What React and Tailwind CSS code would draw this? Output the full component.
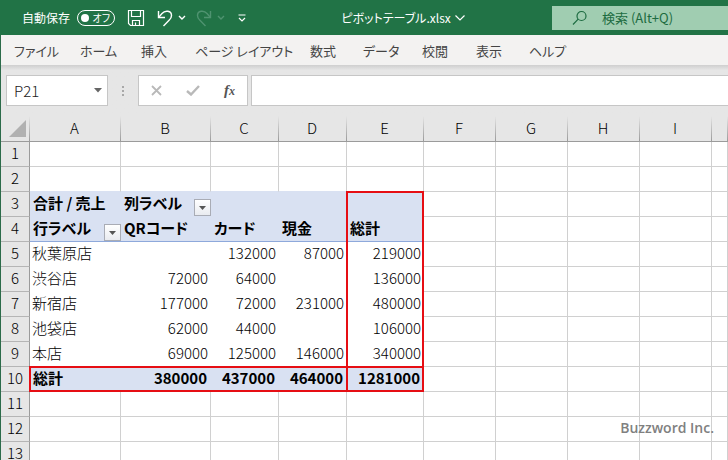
import React from "react";

const tabs = [
  "ファイル",
  "ホーム",
  "挿入",
  "ページ レイアウト",
  "数式",
  "データ",
  "校閲",
  "表示",
  "ヘルプ",
];

const columns = ["A", "B", "C", "D", "E", "F", "G", "H", "I", ""];

const sheet = {
  3: ["合計 / 売上", "列ラベル", "", "", ""],
  4: ["行ラベル", "QRコード", "カード", "現金", "総計"],
  5: ["秋葉原店", "", "132000", "87000", "219000"],
  6: ["渋谷店", "72000", "64000", "", "136000"],
  7: ["新宿店", "177000", "72000", "231000", "480000"],
  8: ["池袋店", "62000", "44000", "", "106000"],
  9: ["本店", "69000", "125000", "146000", "340000"],
  10: ["総計", "380000", "437000", "464000", "1281000"],
};

const rowNumbers = [1, 2, 3, 4, 5, 6, 7, 8, 9, 10, 11, 12, 13];

function Chevron({ className }) {
  return (
    <svg className={className} viewBox="0 0 8 5" fill="none" stroke="currentColor" strokeWidth="1.4">
      <path d="M1 1l3 3 3-3" />
    </svg>
  );
}

function TitleBar() {
  return (
    <header className="flex h-[35px] shrink-0 items-center bg-[#217346] pl-[22px] text-xs text-white">
      <label className="flex shrink-0 items-center gap-[7px]">
        自動保存
        <span className="flex h-4 w-[38px] items-center justify-between rounded-full border border-white pl-[3px] pr-1">
          <input
            type="checkbox"
            className="h-2 w-2 appearance-none rounded-full bg-white"
          />
          <span className="text-[10px] leading-3">オフ</span>
        </span>
      </label>
      <button aria-label="上書き保存" className="ml-3 shrink-0">
        <svg className="h-[18px] w-[18px]" viewBox="0 0 18 18" fill="none" stroke="currentColor" strokeWidth="1.2">
          <path d="M1.5 1.5h15v15H3.5l-2-2z" />
          <path d="M4.5 1.5v6h9v-6M5.5 16.5v-5h7v5M8.5 16v-2.5" />
        </svg>
      </button>
      <button aria-label="元に戻す" className="ml-3 flex shrink-0 items-center gap-[5px]">
        <svg className="h-[18px] w-4" viewBox="0 0 16 18" fill="none" stroke="currentColor" strokeWidth="1.4">
          <path d="M1.500 2v6.500H8" />
          <path d="M1.500 8.500L5 4.500C8 1 14.500 1.500 14.500 6.500c0 2-.9 3.300-2.200 4.500L6.500 17" />
        </svg>
        <Chevron className="h-[5px] w-2" />
      </button>
      <button aria-label="やり直し" disabled className="ml-[10px] flex shrink-0 items-center gap-[5px] text-[#4f9370]">
        <svg className="h-[18px] w-4" viewBox="0 0 16 18" fill="none" stroke="currentColor" strokeWidth="1.4">
          <path d="M14.500 2v6.500H8" />
          <path d="M14.500 8.500L11 4.500C8 1 1.500 1.500 1.500 6.500c0 2 .9 3.300 2.200 4.500L9.500 17" />
        </svg>
        <Chevron className="h-[5px] w-2" />
      </button>
      <button aria-label="クイック アクセス ツール バーのユーザー設定" className="ml-[13px] shrink-0">
        <svg className="h-2 w-2" viewBox="0 0 8 8" fill="none" stroke="currentColor" strokeWidth="1.200">
          <path d="M.5 1h7M1 4l3 3 3-3" />
        </svg>
      </button>
      <div className="flex flex-1 justify-center pl-2">
        <button className="flex items-center gap-1">
          ピボットテーブル.xlsx
          <svg className="h-[6px] w-[10px]" viewBox="0 0 10 6" fill="none" stroke="currentColor" strokeWidth="1.200">
            <path d="M.5.5L5 5 9.500.5" />
          </svg>
        </button>
      </div>
      <label className="flex h-6 w-44 shrink-0 items-center gap-[14px] bg-[#a0cdb1] pl-5 text-[#1c6b40]">
        <svg className="h-4 w-4 shrink-0" viewBox="0 0 16 16" fill="none" stroke="currentColor" strokeWidth="1.200" aria-label="検索">
          <circle cx="9.500" cy="6" r="4.500" />
          <path d="M6.200 9.200L1 14.500" />
        </svg>
        <input
          type="text"
          placeholder="検索 (Alt+Q)"
          className="w-full min-w-0 bg-transparent text-[13px] text-[#1c6b40] outline-none placeholder:text-[#1c6b40]"
        />
      </label>
    </header>
  );
}

function Ribbon() {
  return (
    <nav className="grid h-[30px] shrink-0 grid-cols-[66px_61px_54px_115px_53px_59px_54px_53px_1fr] items-center bg-[#f3f2f1] pl-[13px] pt-[2px] text-[13px] text-[#444]">
      {tabs.map((tab) => (
        <button key={tab} className="whitespace-nowrap text-left">
          {tab}
        </button>
      ))}
    </nav>
  );
}

function FormulaBar() {
  return (
    <div className="flex h-[51px] shrink-0 items-center bg-[#e6e6e6] bg-linear-to-b from-[#cfcfcf] from-0% to-[#e6e6e6] to-10% pl-[5px]">
      <div className="flex h-[31px] w-[102px] items-center border border-[#c6c6c6] bg-white pl-[7px] pr-[5px]">
        <input
          type="text"
          aria-label="名前ボックス"
          defaultValue="P21"
          className="w-full min-w-0 pt-[2px] text-[15px] font-light text-[#222] outline-none"
        />
        <button aria-label="名前の一覧" className="text-[#666]">
          <svg className="h-[5px] w-2" viewBox="0 0 8 5" fill="currentColor">
            <path d="M0 0h8L4 4.500z" />
          </svg>
        </button>
      </div>
      <div className="mx-[14px] flex w-[2px] flex-col gap-[2px]">
        <span className="h-[2px] bg-[#a8a8a8]" />
        <span className="h-[2px] bg-[#a8a8a8]" />
        <span className="h-[2px] bg-[#a8a8a8]" />
      </div>
      <div className="flex h-[31px] w-[110px] items-center justify-between border border-[#c6c6c6] bg-white pl-3 pr-3 text-[#b9b9b9]">
        <button aria-label="キャンセル">
          <svg className="h-[11px] w-[11px]" viewBox="0 0 11 11" fill="none" stroke="currentColor" strokeWidth="1.800">
            <path d="M1 1l9 9M10 1l-9 9" />
          </svg>
        </button>
        <button aria-label="入力">
          <svg className="h-[11px] w-[14px]" viewBox="0 0 14 11" fill="none" stroke="currentColor" strokeWidth="2.400">
            <path d="M1 6l4 3.500L13 1" />
          </svg>
        </button>
        <button
          aria-label="関数の挿入"
          className="font-['Liberation_Serif',serif] text-[15px] leading-4 font-bold text-[#555] italic"
        >
          f<span className="text-xs">x</span>
        </button>
      </div>
      <input
        type="text"
        aria-label="数式バー"
        className="ml-[3px] h-[31px] min-w-0 flex-1 border border-r-0 border-[#c6c6c6] bg-white outline-none"
      />
    </div>
  );
}

function FilterButton({ label }) {
  return (
    <button
      aria-label={label}
      className="flex h-[17px] w-[17px] shrink-0 items-center justify-center border border-[#a9acb5] bg-linear-to-b from-white to-[#e9ebf0] text-[#555]"
    >
      <svg className="h-1 w-[7px]" viewBox="0 0 7 4" fill="currentColor">
        <path d="M0 0h7L3.500 4z" />
      </svg>
    </button>
  );
}

function Cell({ row, col }) {
  const inPivot = row >= 3 && row <= 10 && col < 5;

  if (!inPivot) {
    // the line above the pivot table takes the header fill
    const bottom = row === 2 && col < 5 ? "border-b-[#d9e1f2]" : "border-b-[#d0d0d0]";
    return <td className={`border-r border-b border-r-[#d0d0d0] ${bottom}`} />;
  }

  const value = sheet[row][col];
  const isNumber = /^\d+$/.test(value);

  if (row <= 4) {
    const hasFilter = (row === 3 && col === 1) || (row === 4 && col === 0);
    return (
      <td className={`border-b bg-[#d9e1f2] pl-[3px] font-bold ${row === 4 ? "border-[#8ea9db]" : "border-[#d9e1f2]"}`}>
        <div className="flex h-6 items-end justify-between">
          <span className="h-6 leading-[22px] whitespace-nowrap">{value}</span>
          {hasFilter && <FilterButton label={`${value}のフィルター`} />}
        </div>
      </td>
    );
  }

  if (row === 10) {
    return (
      <td className={`bg-[#d9e1f2] pl-[3px] pr-1 pb-[3px] font-bold ${isNumber ? "text-right" : "text-left"}`}>
        {value}
      </td>
    );
  }

  return (
    <td className={`pl-[2px] pr-[3px] pb-[3px] font-light ${isNumber ? "text-right" : "text-left"}`}>
      {value}
    </td>
  );
}

function Sheet() {
  return (
    <div className="relative">
      <table className="w-full table-fixed border-separate border-spacing-0 text-[15px] leading-[22px] text-black">
        <colgroup>
          <col className="w-[29px]" />
          <col className="w-[91px]" />
          <col className="w-[90px]" />
          <col className="w-[68px]" />
          <col className="w-[68px]" />
          <col className="w-[77px]" />
          <col className="w-[72px]" />
          <col className="w-[72px]" />
          <col className="w-[72px]" />
          <col className="w-[72px]" />
          <col />
        </colgroup>
        <thead>
          <tr className="h-[26px] bg-[#e6e6e6]">
            <th className="border-b border-[#9b9b9b] bg-linear-to-b from-[#e6e6e6] to-[#9b9b9b] bg-[length:1px_100%] bg-right bg-no-repeat pr-1">
              <svg className="ml-auto h-[17px] w-[17px]" viewBox="0 0 17 17" fill="#b1b1b1">
                <path d="M17 0v17H0z" />
              </svg>
            </th>
            {columns.map((name, i) => (
              <th
                key={i}
                scope="col"
                className="border-b border-[#9b9b9b] bg-linear-to-b from-[#e6e6e6] to-[#9b9b9b] bg-[length:1px_100%] bg-right bg-no-repeat pr-[2px] pb-[2px] font-light"
              >
                {name}
              </th>
            ))}
          </tr>
        </thead>
        <tbody>
          {rowNumbers.map((row) => (
            <tr key={row} className="h-[25px]">
              <th
                scope="row"
                className="border-r border-b border-r-[#9b9b9b] border-b-[#b5b5b5] bg-[#e6e6e6] pb-[2px] font-light"
              >
                {row}
              </th>
              {columns.map((_, col) => (
                <Cell key={col} row={row} col={col} />
              ))}
            </tr>
          ))}
        </tbody>
      </table>
      {/* red frames over the grand total column and row */}
      <div className="pointer-events-none absolute top-[75px] left-[345px] h-[201px] w-[78px] border-2 border-[#e60e14]" />
      <div className="pointer-events-none absolute top-[250px] left-7 h-[26px] w-[395px] border-2 border-[#e60e14]" />
    </div>
  );
}

function App() {
  return (
    <div className="relative flex h-screen flex-col overflow-hidden bg-white font-['Noto_Sans_CJK_JP',sans-serif] [font-feature-settings:'palt']">
      <TitleBar />
      <div className="flex-1 border-l border-[#2c6b4a]">
        <Ribbon />
        <FormulaBar />
        <Sheet />
      </div>
      <p className="absolute right-[14px] bottom-5 font-['Open_Sans',sans-serif] text-sm leading-6 font-semibold text-[#808080]">
        Buzzword Inc.
      </p>
    </div>
  );
}

export default App;
